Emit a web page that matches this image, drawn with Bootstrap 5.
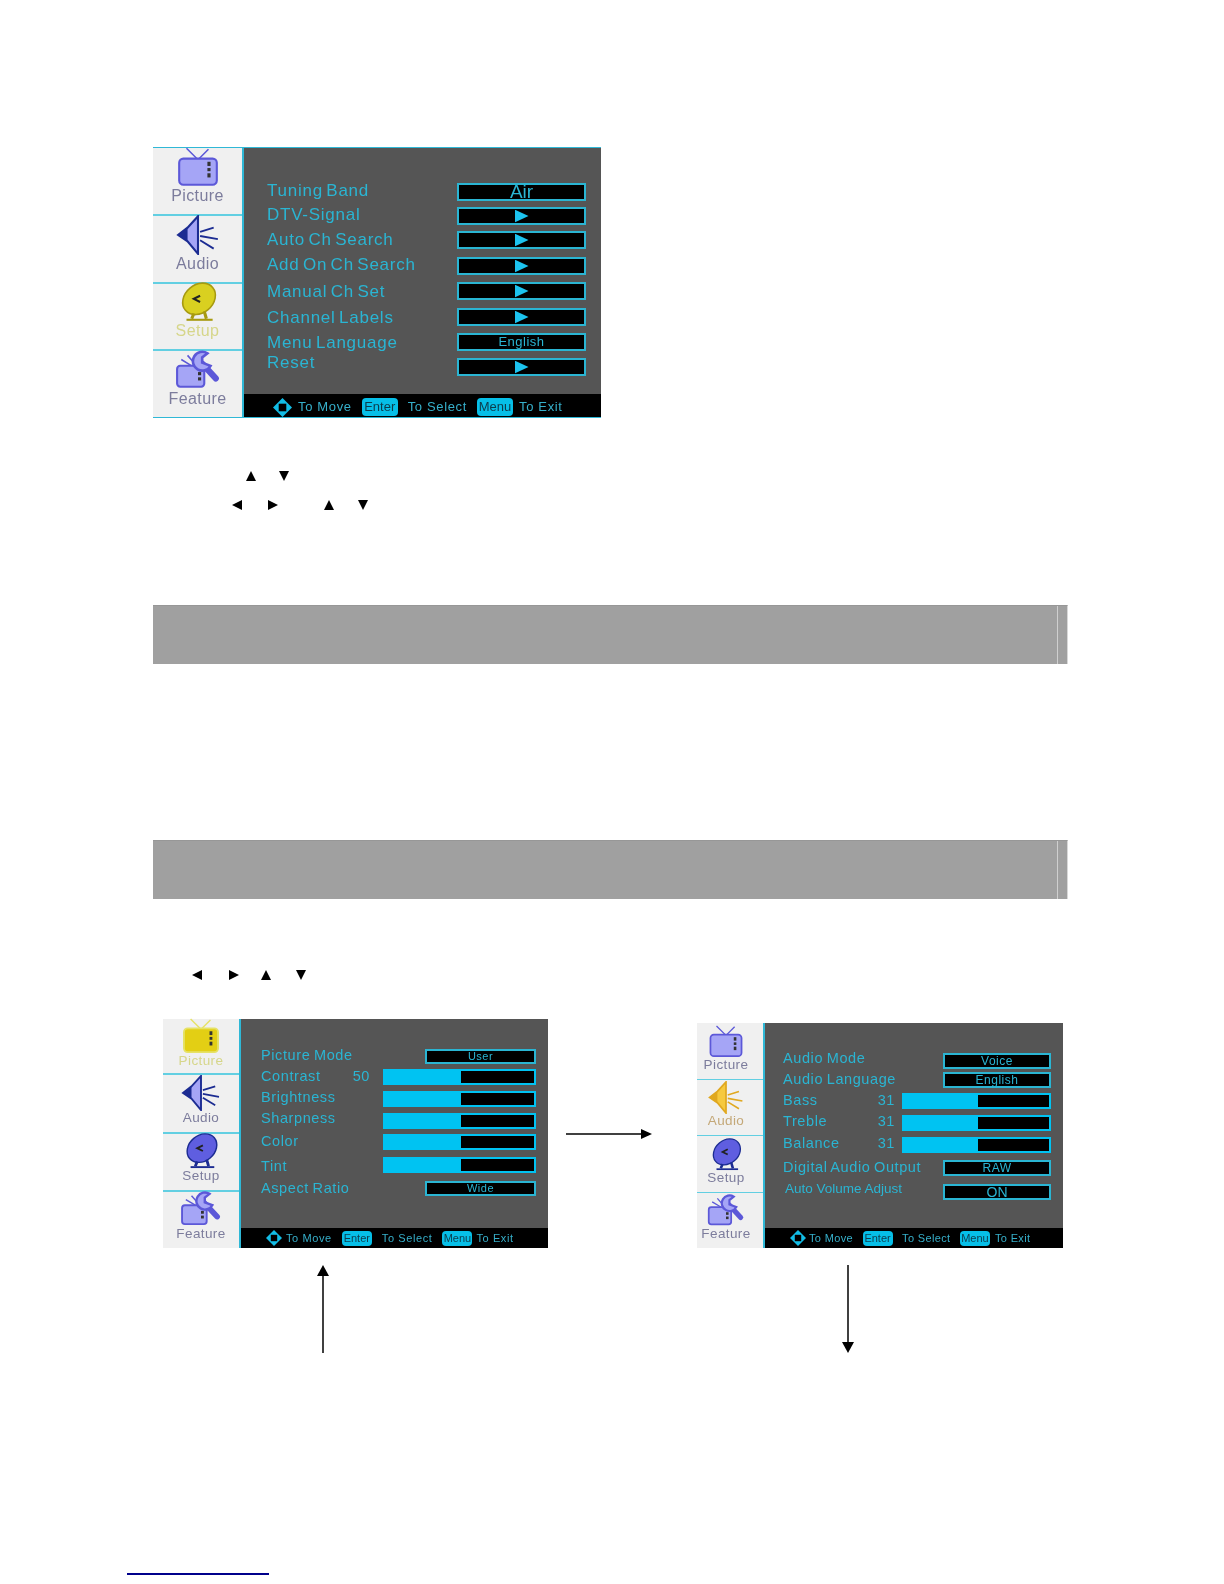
<!DOCTYPE html>
<html lang="en">

<head>
    <meta charset="UTF-8">
    <meta name="viewport" content="width=device-width, initial-scale=1.0">
    <title>TV Setup Menus</title>
    <link href="https://cdn.jsdelivr.net/npm/bootstrap@5.3.0/dist/css/bootstrap.min.css" rel="stylesheet">
    <style>
        body {
            background-color: #fff;
            font-family: "Liberation Sans", Arial, sans-serif;
        }

        /* on-screen menu panels */
        .osd {
            display: flex;
            flex: none;
            background-color: #555;
            color: #2ab5d3;
            filter: blur(.35px);
            --ic-fill: #a5a5f6;
            --ic-line: #5c58d8;
            --ic-dark: #1c2c92;
            --ic-dish: #5f5ee0;
        }

        .osd-first {
            width: 448px;
            height: 271px;
            margin: 147px 0 0 153px;
            border-top: 1px solid #2fb8d6;
            border-bottom: 1px solid #2fb8d6;
        }

        .osd-second {
            width: 385px;
            height: 229px;
        }

        .osd-third {
            width: 366px;
            height: 225px;
            margin-left: 45px;
        }

        .osd-side {
            display: flex;
            flex-direction: column;
            flex: none;
            background-color: #f0f0f0;
            border-right: 2px solid #2fb8d6;
        }

        .osd-first .osd-side { width: 91px; }
        .osd-second .osd-side { width: 78px; }
        .osd-third .osd-side { width: 68px; }

        .side-cell {
            flex: 1 1 0;
            min-height: 0;
            display: flex;
            flex-direction: column;
            align-items: center;
            justify-content: flex-end;
            padding-bottom: 10px;
            color: #7c7c9c;
            font-size: 16px;
            line-height: 17px;
            letter-spacing: .4px;
            border-bottom: 2px solid #62cfe2;
        }

        .osd-second .side-cell,
        .osd-third .side-cell {
            font-size: 13.5px;
            line-height: 14px;
            padding-bottom: 7px;
        }

        .osd-second .side-cell:first-child { padding-bottom: 5px; }

        .osd-third .side-cell {
            padding-right: 8px;
            border-bottom-width: 1px;
        }

        .side-cell:last-child { border-bottom: 0; }

        .side-cell.is-on {
            color: #d6d68a;
            --ic-fill: #e3cf14;
            --ic-line: #e6e266;
            --ic-dark: #a79a10;
            --ic-dish: #d9d020;
        }

        .osd-third .side-cell.is-on {
            color: #c4a878;
            --ic-fill: #f6c93e;
            --ic-line: #e6b52c;
            --ic-dark: #e0a820;
        }

        .osd-icon {
            width: 46px;
            height: 40px;
            flex: none;
            overflow: visible;
        }

        .osd-second .osd-icon {
            width: 42px;
            height: 36px;
        }

        .osd-third .osd-icon {
            width: 38px;
            height: 33px;
        }

        .osd-main {
            flex: 1 1 0;
            display: flex;
            flex-direction: column;
            min-width: 0;
        }

        .osd-body {
            flex: 1 1 0;
            display: flex;
        }

        .osd-labels,
        .osd-values {
            display: grid;
            align-content: start;
        }

        .osd-labels {
            flex: 1 1 0;
            min-width: 0;
            white-space: nowrap;
        }

        .osd-values {
            flex: none;
            justify-items: end;
        }

        .osd-first .osd-labels {
            margin-left: 23px;
            padding-top: 32px;
            grid-template-rows: 24px 25px 25px 27px 26px 25px 20px 20px;
            font-size: 17px;
            line-height: 22px;
            letter-spacing: .75px;
            word-spacing: -2px;
        }

        .osd-first .osd-values {
            margin-right: 15px;
            padding-top: 35px;
            grid-template-rows: 24px 24px 26px 25px 26px 25px 25px 18px;
        }

        .osd-second .osd-labels {
            margin-left: 20px;
            padding-top: 27px;
            grid-template-rows: 21px 21px 21px 23px 25px 22px 20px;
            font-size: 14.5px;
            line-height: 18px;
            letter-spacing: .6px;
            word-spacing: -1px;
        }

        .osd-second .osd-values {
            margin-right: 12px;
            padding-top: 30px;
            grid-template-rows: 20px 22px 22px 21px 23px 24px 16px;
        }

        .osd-third .osd-labels {
            margin-left: 18px;
            padding-top: 26px;
            grid-template-rows: 21px 21px 21px 22px 24px 22px 20px;
            font-size: 14.5px;
            line-height: 18px;
            letter-spacing: .6px;
            word-spacing: -1px;
        }

        .osd-third .osd-values {
            margin-right: 12px;
            padding-top: 30px;
            grid-template-rows: 19px 21px 22px 22px 23px 24px 16px;
        }

        .label-num {
            display: flex;
            justify-content: space-between;
        }

        .osd-second .label-num { width: 109px; }
        .osd-third .label-num { width: 112px; }

        .osd-third .label-plain {
            margin-left: 2px;
            letter-spacing: 0;
            word-spacing: 0;
            font-size: 13.5px;
        }

        .val-box {
            display: flex;
            align-items: center;
            justify-content: center;
            background-color: #000;
            border: 2px solid #2ab5d3;
            color: #2ab5d3;
            letter-spacing: .5px;
        }

        .osd-first .val-box { width: 129px; height: 18px; font-size: 13px; }
        .osd-second .val-box { width: 111px; height: 15px; font-size: 11px; }
        .osd-third .val-box { width: 108px; height: 16px; font-size: 12px; }

        .osd-first .val-big { font-size: 19px; letter-spacing: 0; line-height: 14px; }
        .osd-third .val-on { font-size: 14px; line-height: 12px; letter-spacing: 0; }

        .val-play {
            width: 14px;
            height: 13px;
            background-color: #1cc3ef;
            clip-path: polygon(0 0, 100% 50%, 0 100%);
        }

        .val-bar {
            display: flex;
            height: 16px;
            background-color: #000;
            border: 2px solid #00c3f2;
        }

        .osd-second .val-bar { width: 153px; }
        .osd-third .val-bar { width: 149px; }

        .val-bar-fill {
            background-color: #00c3f2;
        }

        .osd-foot {
            display: flex;
            align-items: center;
            flex: none;
            background-color: #000;
            color: #36afca;
            white-space: nowrap;
        }

        .osd-first .osd-foot {
            height: 23px;
            padding: 3px 0 0 29px;
            font-size: 13px;
            letter-spacing: .65px;
            --foot-ic: 19px;
            --foot-pill: 36px;
            --foot-pill-h: 18px;
            --foot-a: 6px;
            --foot-b: 10px;
            --foot-c: 6px;
        }

        .osd-second .osd-foot,
        .osd-third .osd-foot {
            height: 20px;
            padding-left: 25px;
            font-size: 11px;
            --foot-ic: 16px;
            --foot-pill: 30px;
            --foot-pill-h: 15px;
        }

        .osd-second .osd-foot {
            letter-spacing: .6px;
            --foot-a: 4px;
            --foot-b: 10px;
            --foot-c: 4px;
        }

        .osd-third .osd-foot {
            letter-spacing: .35px;
            --foot-a: 3px;
            --foot-b: 9.5px;
            --foot-c: 5px;
        }

        .foot-move {
            width: var(--foot-ic);
            height: var(--foot-ic);
            flex: none;
            margin-right: var(--foot-a);
        }

        .foot-pill {
            width: var(--foot-pill);
            height: var(--foot-pill-h);
            flex: none;
            margin: 0 var(--foot-b);
            background-color: #06bfe8;
            color: #0c3c4c;
            border-radius: 4px;
            text-align: center;
            line-height: var(--foot-pill-h);
            letter-spacing: 0;
        }

        .foot-pill-end { margin-right: var(--foot-c); }

        /* small black arrow keys */
        .tri-row {
            display: flex;
            height: 10px;
        }

        .tri {
            width: 10px;
            height: 10px;
            flex: none;
            background-color: #000;
        }

        .tri-up { clip-path: polygon(50% 0, 100% 100%, 0 100%); }
        .tri-down { clip-path: polygon(0 0, 100% 0, 50% 100%); }
        .tri-left { clip-path: polygon(0 50%, 100% 0, 100% 100%); }
        .tri-right { clip-path: polygon(0 0, 100% 50%, 0 100%); }

        .tri-row-one { margin: 53px 0 0 246px; gap: 23px; }
        .tri-row-two { margin: 19px 0 0 232px; }
        .tri-row-two .tri:nth-child(2) { margin-left: 26px; }
        .tri-row-two .tri:nth-child(3) { margin-left: 46px; }
        .tri-row-two .tri:nth-child(4) { margin-left: 24px; }
        .tri-row-three { margin: 71px 0 0 192px; }
        .tri-row-three .tri:nth-child(2) { margin-left: 27px; }
        .tri-row-three .tri:nth-child(3) { margin-left: 22px; }
        .tri-row-three .tri:nth-child(4) { margin-left: 25px; }

        /* grey heading bands */
        .band {
            display: flex;
            width: 915px;
            height: 59px;
            margin-left: 153px;
            background-color: #a0a0a0;
            border-top: 1px solid #979797;
            border-right: 1px solid #d8d8d8;
        }

        .band-one { margin-top: 95px; }
        .band-two { margin-top: 176px; }

        .band-cap {
            width: 10px;
            margin-left: auto;
            border-left: 1px solid #cfcfcf;
        }

        .osd-pair {
            display: flex;
            align-items: flex-end;
            margin: 39px 0 0 163px;
        }

        .arrow-right {
            width: 86px;
            height: 10px;
            flex: none;
            align-self: center;
            margin-left: 18px;
            display: block;
        }

        .arrow-pair {
            display: flex;
            margin: 17px 0 0 316px;
        }

        .arrow-tall {
            width: 14px;
            height: 88px;
            flex: none;
        }

        .arrow-tall + .arrow-tall { margin-left: 511px; }

        .foot-rule {
            width: 142px;
            height: 2px;
            margin: 220px 0 0 127px;
            background-color: #00008b;
        }
    </style>
</head>

<body>
    <svg class="d-none" xmlns="http://www.w3.org/2000/svg">
        <symbol id="ic-tv" viewBox="0 0 44 38">
            <path d="M11 1 L22 12 L32 2" fill="none" stroke="var(--ic-line)" stroke-width="1.5" />
            <rect x="4" y="11" width="36" height="25" rx="4" fill="var(--ic-fill)" stroke="var(--ic-line)" stroke-width="2" />
            <rect x="31" y="14" width="3" height="4" fill="#333" />
            <rect x="31" y="20" width="3" height="3" fill="#333" />
            <rect x="31" y="25" width="3" height="4" fill="#333" />
        </symbol>
        <symbol id="ic-speaker" viewBox="0 0 44 38">
            <path d="M22 1 V37 L12 25 L3 19 L12 12 Z" fill="var(--ic-fill)" stroke="var(--ic-dark)" stroke-width="2" />
            <path d="M3 19 L12 12 V25 Z" fill="var(--ic-dark)" />
            <path d="M24 16 L37 12 M24 20 L41 23 M24 24 L37 32" fill="none" stroke="var(--ic-dark)" stroke-width="1.8" />
        </symbol>
        <symbol id="ic-dish" viewBox="0 0 44 38">
            <ellipse cx="23" cy="16" rx="17" ry="13.5" transform="rotate(-40 23 16)" fill="var(--ic-dish)" stroke="var(--ic-dark)" stroke-width="1.5" />
            <path d="M24 13 L18 16 L24 19" fill="none" stroke="#222" stroke-width="2" />
            <path d="M18 30 L16 35 M28 28 L30 35" stroke="var(--ic-dark)" stroke-width="3" />
            <path d="M11 36 H36" stroke="var(--ic-dark)" stroke-width="2" />
        </symbol>
        <symbol id="ic-tool" viewBox="0 0 44 38">
            <path d="M6 9 L16 15 M12 5 L19 13" stroke="var(--ic-line)" stroke-width="1.5" />
            <rect x="2" y="15" width="26" height="20" rx="3" fill="var(--ic-fill)" stroke="var(--ic-line)" stroke-width="2" />
            <rect x="22" y="21" width="3" height="3" fill="#333" />
            <rect x="22" y="26" width="3" height="3" fill="#333" />
            <path d="M26 13 L39 27" stroke="var(--ic-line)" stroke-width="6" stroke-linecap="round" />
            <path d="M31 3 A9 9 0 1 0 34 15 L26 12 L26 7 Z" fill="var(--ic-fill)" stroke="var(--ic-line)" stroke-width="2.5" />
        </symbol>
        <symbol id="ic-move" viewBox="0 0 20 20">
            <path d="M10 0 L20 10 L10 20 L0 10 Z" fill="#12bde6" />
            <rect x="6" y="6" width="8" height="8" fill="#000" />
        </symbol>
    </svg>

    <!-- Setup menu -->
    <div class="osd osd-first">
        <div class="osd-side">
            <div class="side-cell"><svg class="osd-icon"><use href="#ic-tv" /></svg>Picture</div>
            <div class="side-cell"><svg class="osd-icon"><use href="#ic-speaker" /></svg>Audio</div>
            <div class="side-cell is-on"><svg class="osd-icon"><use href="#ic-dish" /></svg>Setup</div>
            <div class="side-cell"><svg class="osd-icon"><use href="#ic-tool" /></svg>Feature</div>
        </div>
        <div class="osd-main">
            <div class="osd-body">
                <div class="osd-labels">
                    <div>Tuning Band</div>
                    <div>DTV-Signal</div>
                    <div>Auto Ch Search</div>
                    <div>Add On Ch Search</div>
                    <div>Manual Ch Set</div>
                    <div>Channel Labels</div>
                    <div>Menu Language</div>
                    <div>Reset</div>
                </div>
                <div class="osd-values">
                    <div class="val-box val-big">Air</div>
                    <div class="val-box"><span class="val-play"></span></div>
                    <div class="val-box"><span class="val-play"></span></div>
                    <div class="val-box"><span class="val-play"></span></div>
                    <div class="val-box"><span class="val-play"></span></div>
                    <div class="val-box"><span class="val-play"></span></div>
                    <div class="val-box">English</div>
                    <div class="val-box"><span class="val-play"></span></div>
                </div>
            </div>
            <div class="osd-foot">
                <svg class="foot-move"><use href="#ic-move" /></svg>
                <span>To Move</span>
                <span class="foot-pill">Enter</span>
                <span>To Select</span>
                <span class="foot-pill foot-pill-end">Menu</span>
                <span>To Exit</span>
            </div>
        </div>
    </div>

    <div class="tri-row tri-row-one">
        <span class="tri tri-up"></span>
        <span class="tri tri-down"></span>
    </div>
    <div class="tri-row tri-row-two">
        <span class="tri tri-left"></span>
        <span class="tri tri-right"></span>
        <span class="tri tri-up"></span>
        <span class="tri tri-down"></span>
    </div>

    <div class="band band-one"><span class="band-cap"></span></div>
    <div class="band band-two"><span class="band-cap"></span></div>

    <div class="tri-row tri-row-three">
        <span class="tri tri-left"></span>
        <span class="tri tri-right"></span>
        <span class="tri tri-up"></span>
        <span class="tri tri-down"></span>
    </div>

    <div class="osd-pair">
        <!-- Picture menu -->
        <div class="osd osd-second">
            <div class="osd-side">
                <div class="side-cell is-on"><svg class="osd-icon"><use href="#ic-tv" /></svg>Picture</div>
                <div class="side-cell"><svg class="osd-icon"><use href="#ic-speaker" /></svg>Audio</div>
                <div class="side-cell"><svg class="osd-icon"><use href="#ic-dish" /></svg>Setup</div>
                <div class="side-cell"><svg class="osd-icon"><use href="#ic-tool" /></svg>Feature</div>
            </div>
            <div class="osd-main">
                <div class="osd-body">
                    <div class="osd-labels">
                        <div>Picture Mode</div>
                        <div class="label-num"><span>Contrast</span><span>50</span></div>
                        <div>Brightness</div>
                        <div>Sharpness</div>
                        <div>Color</div>
                        <div>Tint</div>
                        <div>Aspect Ratio</div>
                    </div>
                    <div class="osd-values">
                        <div class="val-box">User</div>
                        <div class="val-bar"><div class="val-bar-fill" style="width: 51%"></div></div>
                        <div class="val-bar"><div class="val-bar-fill" style="width: 51%"></div></div>
                        <div class="val-bar"><div class="val-bar-fill" style="width: 51%"></div></div>
                        <div class="val-bar"><div class="val-bar-fill" style="width: 51%"></div></div>
                        <div class="val-bar"><div class="val-bar-fill" style="width: 51%"></div></div>
                        <div class="val-box">Wide</div>
                    </div>
                </div>
                <div class="osd-foot">
                    <svg class="foot-move"><use href="#ic-move" /></svg>
                    <span>To Move</span>
                    <span class="foot-pill">Enter</span>
                    <span>To Select</span>
                    <span class="foot-pill foot-pill-end">Menu</span>
                    <span>To Exit</span>
                </div>
            </div>
        </div>

        <svg class="arrow-right" viewBox="0 0 86 10">
            <path d="M0 5 H76" stroke="#000" stroke-width="1.5" />
            <path d="M75 0 L86 5 L75 10 Z" fill="#000" />
        </svg>

        <!-- Audio menu -->
        <div class="osd osd-third">
            <div class="osd-side">
                <div class="side-cell"><svg class="osd-icon"><use href="#ic-tv" /></svg>Picture</div>
                <div class="side-cell is-on"><svg class="osd-icon"><use href="#ic-speaker" /></svg>Audio</div>
                <div class="side-cell"><svg class="osd-icon"><use href="#ic-dish" /></svg>Setup</div>
                <div class="side-cell"><svg class="osd-icon"><use href="#ic-tool" /></svg>Feature</div>
            </div>
            <div class="osd-main">
                <div class="osd-body">
                    <div class="osd-labels">
                        <div>Audio Mode</div>
                        <div>Audio Language</div>
                        <div class="label-num"><span>Bass</span><span>31</span></div>
                        <div class="label-num"><span>Treble</span><span>31</span></div>
                        <div class="label-num"><span>Balance</span><span>31</span></div>
                        <div>Digital Audio Output</div>
                        <div class="label-plain">Auto Volume Adjust</div>
                    </div>
                    <div class="osd-values">
                        <div class="val-box">Voice</div>
                        <div class="val-box">English</div>
                        <div class="val-bar"><div class="val-bar-fill" style="width: 51%"></div></div>
                        <div class="val-bar"><div class="val-bar-fill" style="width: 51%"></div></div>
                        <div class="val-bar"><div class="val-bar-fill" style="width: 51%"></div></div>
                        <div class="val-box">RAW</div>
                        <div class="val-box val-on">ON</div>
                    </div>
                </div>
                <div class="osd-foot">
                    <svg class="foot-move"><use href="#ic-move" /></svg>
                    <span>To Move</span>
                    <span class="foot-pill">Enter</span>
                    <span>To Select</span>
                    <span class="foot-pill foot-pill-end">Menu</span>
                    <span>To Exit</span>
                </div>
            </div>
        </div>
    </div>

    <div class="arrow-pair">
        <svg class="arrow-tall" viewBox="0 0 14 88">
            <path d="M7 10 V88" stroke="#000" stroke-width="1.5" />
            <path d="M1 11 L7 0 L13 11 Z" fill="#000" />
        </svg>
        <svg class="arrow-tall" viewBox="0 0 14 88">
            <path d="M7 0 V78" stroke="#000" stroke-width="1.5" />
            <path d="M1 77 L7 88 L13 77 Z" fill="#000" />
        </svg>
    </div>

    <div class="foot-rule"></div>

    <script src="https://cdn.jsdelivr.net/npm/bootstrap@5.3.0/dist/js/bootstrap.bundle.min.js"></script>
</body>

</html>
